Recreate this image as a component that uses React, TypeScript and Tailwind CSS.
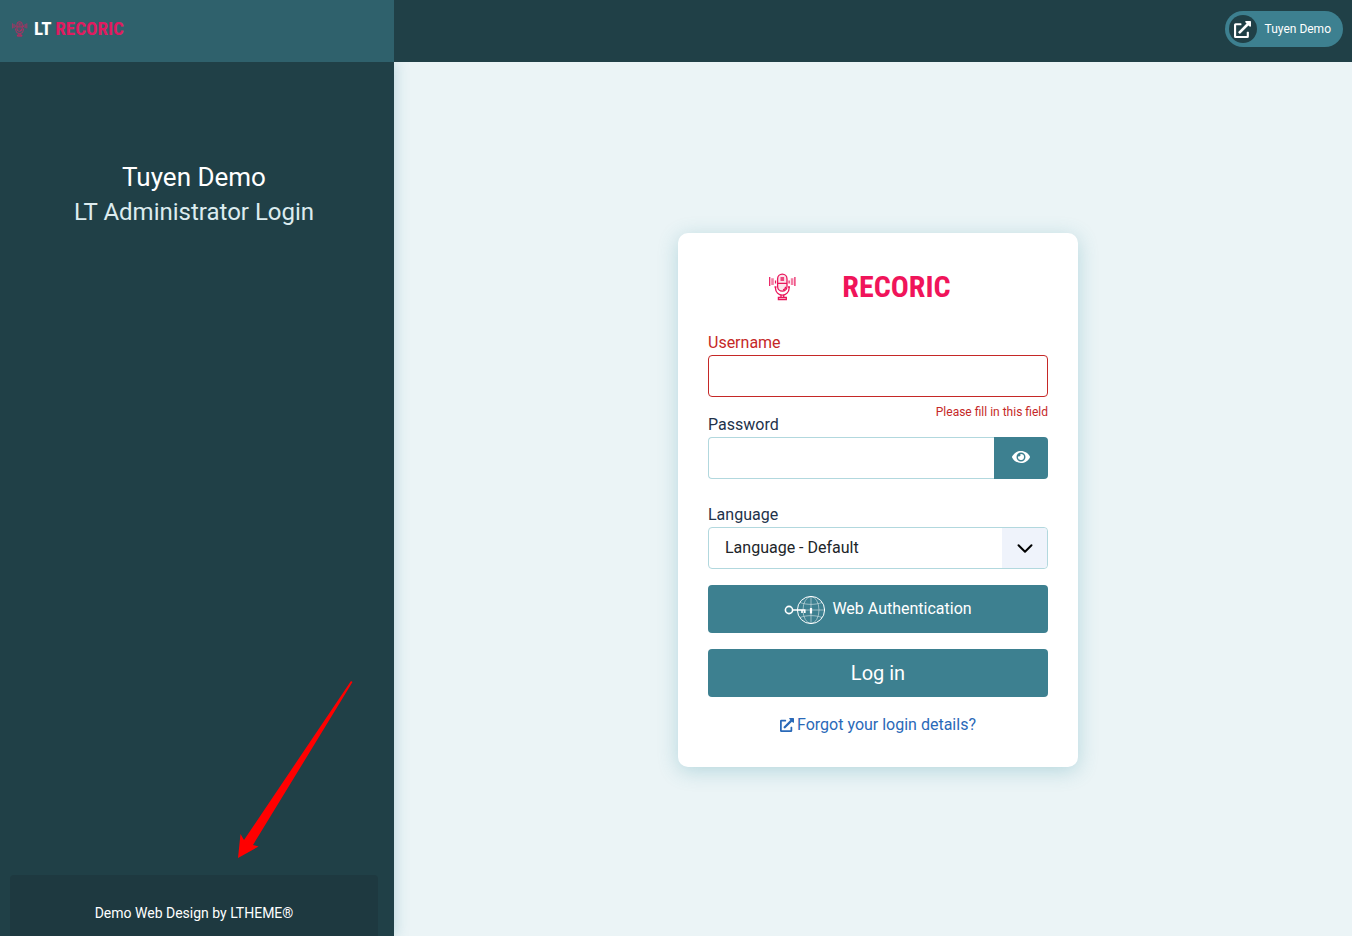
import { useState } from "react";
import { FaExternalLinkAlt, FaEye } from "react-icons/fa";

function MicIcon({ className }: { className: string }) {
  return (
    <svg viewBox="0 0 28 28" className={className} fill="none" stroke="currentColor" strokeWidth="1.3" aria-hidden="true">
      <rect x="8.6" y="1.200" width="9.4" height="17" rx="4.700" fill="#e9155b" fillOpacity="0.12" />
      <path d="M11.500 5h3.600M11.500 7h3.600M8.600 10.300h9.400M14 17c1.800-.4 2.600-1.600 2.600-3.200" />
      <path d="M6.500 14v1.300a6.800 6.800 0 0 0 13.600 0V14M5.500 14h2M19 14h2" />
      <path d="M12 22v2M14.700 22v2M9.400 24.400h7.900v2.200h-7.900z" fill="#e9155b" fillOpacity="0.4" />
      <path d="M.7 4v9M25.900 4v9M6.500 7.500v3M20.100 7.500v3" strokeWidth="1.200" />
      <path d="M3.500 5.300v6.800M23.100 5.300v6.800" strokeWidth="2.600" strokeOpacity="0.55" />
    </svg>
  );
}

function GlobeKeyIcon() {
  return (
    <svg viewBox="0 0 42 30" className="h-[30px] w-[42px]" fill="none" stroke="currentColor" aria-hidden="true">
      <g strokeWidth="0.7" opacity="0.7">
        <ellipse cx="27" cy="15" rx="8" ry="13.5" />
        <path d="M27 1.5v27M13 15h28M16 7.5c6.500 2.500 15.500 2.500 22 0M16 22.500c6.500-2.500 15.500-2.500 22 0" />
      </g>
      <circle cx="27" cy="15" r="13.6" strokeWidth="1" />
      <circle cx="5" cy="15" r="3.6" strokeWidth="1.600" />
      <path d="M8.600 15H21.500M18 15v3M20.800 15v3" strokeWidth="1.600" />
      <path d="M27 13v5.500" strokeWidth="2.200" />
    </svg>
  );
}

function Arrow() {
  return (
    <svg viewBox="0 0 116 180" className="pointer-events-none absolute right-[41px] bottom-[76px] h-[180px] w-[116px]" aria-hidden="true">
      <path d="M114 1L115.500 2L16 165L21.500 166.500L1 178L3.500 154L7 160Z" fill="#ff0000" />
    </svg>
  );
}

const brandFont = "font-['Liberation_Sans_Narrow','Roboto_Condensed','Roboto',sans-serif] font-bold";
const fieldClass = "h-[42px] w-full rounded border bg-white px-4 text-base outline-none";
const labelClass = "block h-[25px] text-base leading-[26px]";
const buttonClass = "flex h-12 w-full items-center justify-center rounded bg-[#3d8090] text-white";

export default function App() {
  const [shown, setShown] = useState(false);
  return (
    <div className="flex min-h-screen flex-col bg-[#ebf4f6] font-['Roboto',sans-serif] text-[#212529]">
      <header className="relative z-10 flex h-[62px] bg-[#204047]">
        <div className="flex w-[394px] shrink-0 items-center bg-[#2f616c] px-3 pb-1">
          <MicIcon className="size-4 text-[#cf2560]" />
          <span className={`${brandFont} ml-1.5 text-[19px] leading-6 text-white`}>
            LT <span className="text-[#e01b60]">RECORIC</span>
          </span>
        </div>
        <div className="flex flex-1 items-start justify-end px-[9px] pt-[11px]">
          <a href="#site" className="flex h-9 items-center gap-2 rounded-full bg-[#3d8090] pr-3 pl-1 text-xs text-white">
            <span className="flex size-7 items-center justify-center rounded-full bg-[#204047]">
              <FaExternalLinkAlt className="size-[17px]" />
            </span>
            Tuyen Demo
          </a>
        </div>
      </header>

      <div className="flex flex-1">
        <aside className="relative flex w-[394px] shrink-0 flex-col justify-between bg-[#204047] pr-4 pl-2.5 text-center shadow-[2px_0_12px_rgba(61,140,160,0.25)]">
          <div className="pt-[98px]">
            <h1 className="text-[26px] leading-[34px] text-white">Tuyen Demo</h1>
            <h2 className="text-2xl leading-9 text-[#dcecef]">LT Administrator Login</h2>
          </div>
          <Arrow />
          <footer className="rounded-t bg-[#1e3940] pt-7 pb-[13px] text-sm leading-5 text-white">
            Demo Web Design by LTHEME®
          </footer>
        </aside>

        <main className="flex flex-1 items-center justify-center pt-0.5 pl-2.5">
          <form className="w-[400px] rounded-[10px] bg-white p-[30px] shadow-[0_4px_20px_rgba(61,150,165,0.3)]" onSubmit={(e) => e.preventDefault()}>
            <div className="mb-[19px] flex h-12 items-center justify-center gap-[45px] pr-9">
              <MicIcon className="size-7 text-[#e9155b]" />
              <span className={`${brandFont} text-[30px] leading-9 text-[#f0145a]`}>RECORIC</span>
            </div>

            <label htmlFor="username" className={`${labelClass} text-[#c52827]`}>Username</label>
            <input id="username" type="text" aria-invalid="true" aria-describedby="username-error" className={`${fieldClass} block border-[#c52827]`} />
            <p id="username-error" className="-mb-[9px] pt-1.5 text-right text-xs leading-[18px] text-[#c52827]">Please fill in this field</p>

            <label htmlFor="password" className={`${labelClass} w-40 text-[#22324a]`}>Password</label>
            <div className="flex">
              <input id="password" type={shown ? "text" : "password"} className={`${fieldClass} min-w-0 flex-1 rounded-r-none border-r-0 border-[#b2d8de]`} />
              <button type="button" aria-label="Show password" onClick={() => setShown(!shown)} className="flex w-[54px] items-center justify-center rounded-r bg-[#3d8090] pb-0.5 text-white">
                <FaEye className="size-[18px]" />
              </button>
            </div>

            <label htmlFor="language" className={`${labelClass} mt-[23px] text-[#22324a]`}>Language</label>
            <div className="relative">
              <select id="language" className={`${fieldClass} block appearance-none border-[#b2d8de]`}>
                <option>Language - Default</option>
              </select>
              <span className="pointer-events-none absolute inset-y-px right-px flex w-[45px] items-center justify-center rounded-r bg-[#eff3fb]">
                <svg viewBox="0 0 16 16" className="size-4" fill="none" stroke="#000" strokeWidth="2" strokeLinecap="round" strokeLinejoin="round" aria-hidden="true">
                  <path d="M1.500 5.200L8 11.700L14.500 5.200" />
                </svg>
              </span>
            </div>

            <button type="button" className={`${buttonClass} mt-4 gap-1.5 pt-0.5 text-base`}>
              <GlobeKeyIcon />
              <span className="pb-0.5">Web Authentication</span>
            </button>
            <button type="submit" className={`${buttonClass} mt-4 text-xl`}>Log in</button>
            <a href="#forgot" className="mt-4 flex h-6 items-center justify-center gap-[3px] text-base leading-6 text-[#2a69b8]">
              <FaExternalLinkAlt className="size-3.5" />
              <span>Forgot your login details?</span>
            </a>
          </form>
        </main>
      </div>
    </div>
  );
}
